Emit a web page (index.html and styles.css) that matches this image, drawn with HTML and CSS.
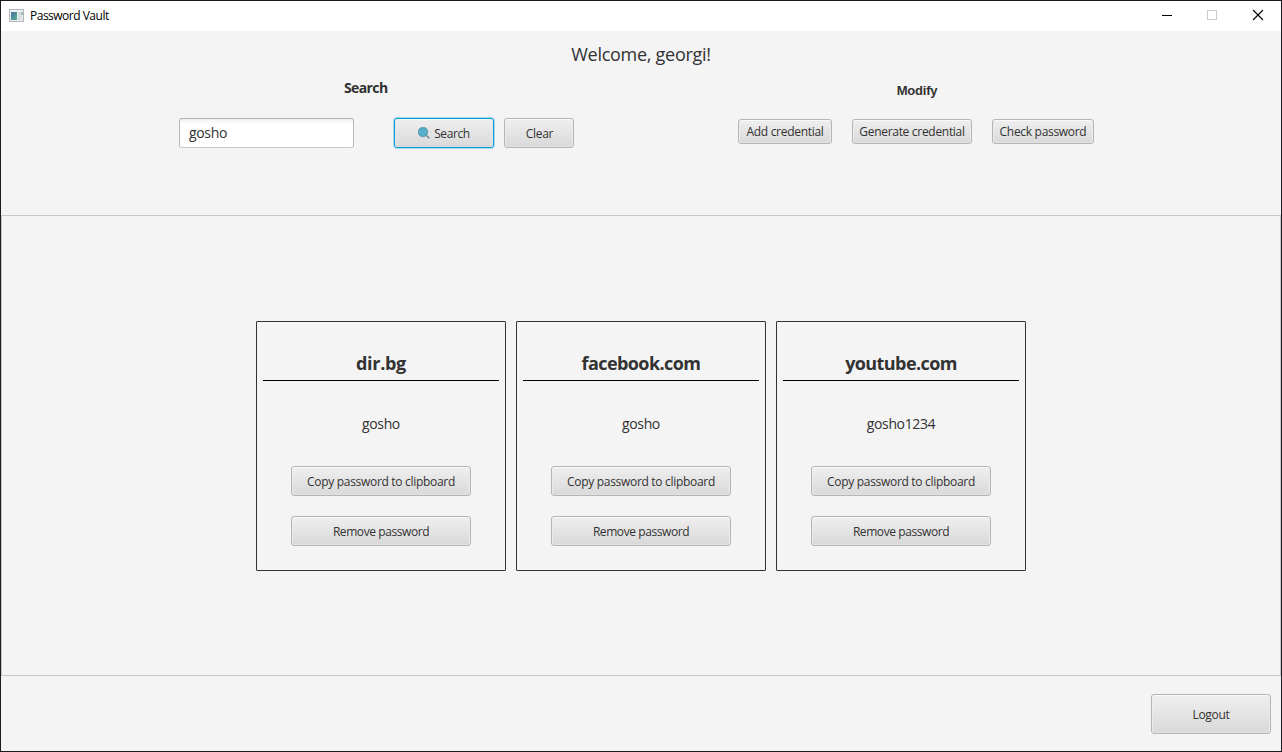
FILE: index.html
```html
<!DOCTYPE html>
<html lang="en">
<head>
<meta charset="utf-8">
<title>Password Vault</title>
<link rel="stylesheet" href="styles.css">
</head>
<body>
<div class="window">
  <header class="titlebar">
    <svg class="app-icon" width="16" height="14" viewBox="0 0 16 14" shape-rendering="crispEdges">
      <defs><linearGradient id="pane" x1="0" y1="0" x2="1" y2="1"><stop offset="0" stop-color="#4a6fa0"/><stop offset="1" stop-color="#58b08c"/></linearGradient></defs>
      <rect x=".5" y=".5" width="14" height="12" fill="#eef0f1" stroke="#b2b6ba"/>
      <rect x="2" y="3" width="6" height="8" fill="url(#pane)"/>
      <rect x="9" y="3" width="3" height="8" fill="#d5dee2"/>
      <rect x="12" y="3" width="2" height="3" fill="#9fc0b5"/>
      <rect x="12" y="6" width="2" height="5" fill="#e4e9ea"/>
    </svg>
    <span class="app-name">Password Vault</span>
    <div class="controls">
      <svg width="46" height="30" viewBox="0 0 46 30"><path d="M18 14.5h10" stroke="#000"/></svg>
      <svg width="46" height="30" viewBox="0 0 46 30"><rect x="17.5" y="9.5" width="9" height="9" fill="none" stroke="#ccc"/></svg>
      <svg width="46" height="30" viewBox="0 0 46 30"><path d="M17 9l10 10M27 9L17 19" stroke="#000" stroke-width="1.1"/></svg>
    </div>
  </header>
  <section class="top">
    <h1 class="welcome">Welcome, georgi!</h1>
    <div class="tools">
      <div class="search">
        <h2 class="search-title">Search</h2>
        <div class="search-row">
          <input class="field" type="text" value="gosho">
          <button class="btn focused"><svg width="12" height="12" viewBox="0 0 12 12"><path d="M8 8l3.4 3.3" stroke="#727b8f" stroke-width="1.4"/><circle cx="5" cy="5" r="4.8" fill="#4da9c4" stroke="#6898aa" stroke-width=".8"/><path d="M2 6.4L6.4 2M4 8l4-4" stroke="#7cc5d5" stroke-width=".9"/></svg><span>Search</span></button>
          <button class="btn clear"><span>Clear</span></button>
        </div>
      </div>
      <div class="modify">
        <h2 class="modify-title">Modify</h2>
        <div class="modify-row">
          <button class="btn add"><span>Add credential</span></button>
          <button class="btn generate"><span>Generate credential</span></button>
          <button class="btn check"><span>Check password</span></button>
        </div>
      </div>
    </div>
  </section>
  <main class="vault">
    <article class="card">
      <h3 class="site short">dir.bg</h3>
      <p class="user">gosho</p>
      <button class="btn wide"><span>Copy password to clipboard</span></button>
      <button class="btn wide remove"><span>Remove password</span></button>
    </article>
    <article class="card">
      <h3 class="site">facebook.com</h3>
      <p class="user">gosho</p>
      <button class="btn wide"><span>Copy password to clipboard</span></button>
      <button class="btn wide remove"><span>Remove password</span></button>
    </article>
    <article class="card">
      <h3 class="site">youtube.com</h3>
      <p class="user">gosho1234</p>
      <button class="btn wide"><span>Copy password to clipboard</span></button>
      <button class="btn wide remove"><span>Remove password</span></button>
    </article>
  </main>
  <footer class="bottom">
    <button class="btn logout"><span>Logout</span></button>
  </footer>
</div>
</body>
</html>
```
FILE: styles.css
```css
* { box-sizing: border-box; margin: 0; }
body {
  font-family: "Open Sans", "Noto Sans", sans-serif;
  font-size: 12px;
  color: #323232;
}
h1, h2, h3, p { line-height: 20px; white-space: nowrap; text-align: center; }
.window {
  width: 1282px;
  height: 752px;
  border: 1px solid #1c1a1e;
  background: #f4f4f4;
  display: flex;
  flex-direction: column;
}
.titlebar {
  height: 30px;
  flex: none;
  background: #fff;
  display: flex;
  align-items: center;
  padding-left: 8px;
}
.app-icon { margin-bottom: 1px; }
.app-name { margin: 0 0 2px 5px; color: #000; letter-spacing: -.5px; }
.controls { margin: 0 -1px 0 auto; display: flex; }
.top { height: 184px; flex: none; padding-top: 13px; }
.welcome { font-size: 18px; font-weight: 400; letter-spacing: -.28px; }
.tools { display: flex; }
.search { width: 395px; margin-left: 178px; }
.search-title {
  width: 43px;
  margin: 14px 0 20px 165px;
  font-size: 14px;
  letter-spacing: -.62px;
}
.search-row { display: flex; }
.field {
  width: 175px;
  height: 30px;
  margin-right: 40px;
  padding: 0 9px 1px;
  border: 1px solid #b9b9b9;
  border-top-color: #b2b2b2;
  border-bottom-color: #cacaca;
  border-radius: 3px;
  background: linear-gradient(#f0f0f0, #fff 5px);
  font: 14px "Open Sans", "Noto Sans", sans-serif;
  letter-spacing: -.35px;
  color: #323232;
}
.btn {
  height: 30px;
  padding: 0;
  border: 1px solid #b5b5b5;
  border-radius: 3px;
  background: linear-gradient(#efefef, #d9d9d9);
  box-shadow: inset 0 1px #fafafa, inset 1px 0 #ebebeb, inset -1px 0 #ebebeb, inset 0 -1px #e2e2e2;
  font: 12px "Open Sans", "Noto Sans", sans-serif;
  letter-spacing: -.3px;
  color: #323232;
  white-space: nowrap;
  display: flex;
  align-items: center;
  justify-content: center;
}
.focused {
  width: 100px;
  gap: 4px;
  border-color: #039ed3;
  letter-spacing: -.4px;
  box-shadow: 0 0 0 1px #a6d9ea, inset 0 1px #f6f6f6, inset 1px 0 #e8e8e8, inset -1px 0 #e8e8e8;
}
.clear { width: 70px; margin-left: 10px; padding-left: 1px; }
.modify { margin-left: 164px; width: 356px; }
.modify-title {
  width: 42px;
  margin: 17px 0 18px 158px;
  font: bold 13px/20px "Liberation Sans", Arial, sans-serif;
  letter-spacing: -.2px;
}
.modify-row { display: flex; gap: 20px; }
.modify-row .btn { height: 25px; }
.add { width: 94px; }
.generate { width: 120px; }
.check { width: 102px; }
.vault {
  height: 461px;
  flex: none;
  border: 1px solid #c8c8c8;
  display: flex;
  align-items: center;
  justify-content: center;
  gap: 10px;
}
.card {
  width: 250px;
  height: 250px;
  border: 1px solid #323232;
  border-radius: 1px;
  padding: 31px 6px 0;
  display: flex;
  flex-direction: column;
  align-items: center;
}
.site {
  width: 236px;
  height: 28px;
  border-bottom: 1px solid #000;
  font-size: 18px;
  letter-spacing: -.58px;
}
.short { letter-spacing: -.3px; }
.user { margin: 33px 0 32px; font-size: 14px; letter-spacing: -.37px; }
.wide { width: 180px; flex: none; padding-top: 2px; }
.wide + .wide { margin-top: 20px; }
.remove { letter-spacing: -.42px; }
.bottom { flex: 1; padding: 18px 10px; display: flex; justify-content: flex-end; }
.logout { width: 120px; height: 40px; }
```
